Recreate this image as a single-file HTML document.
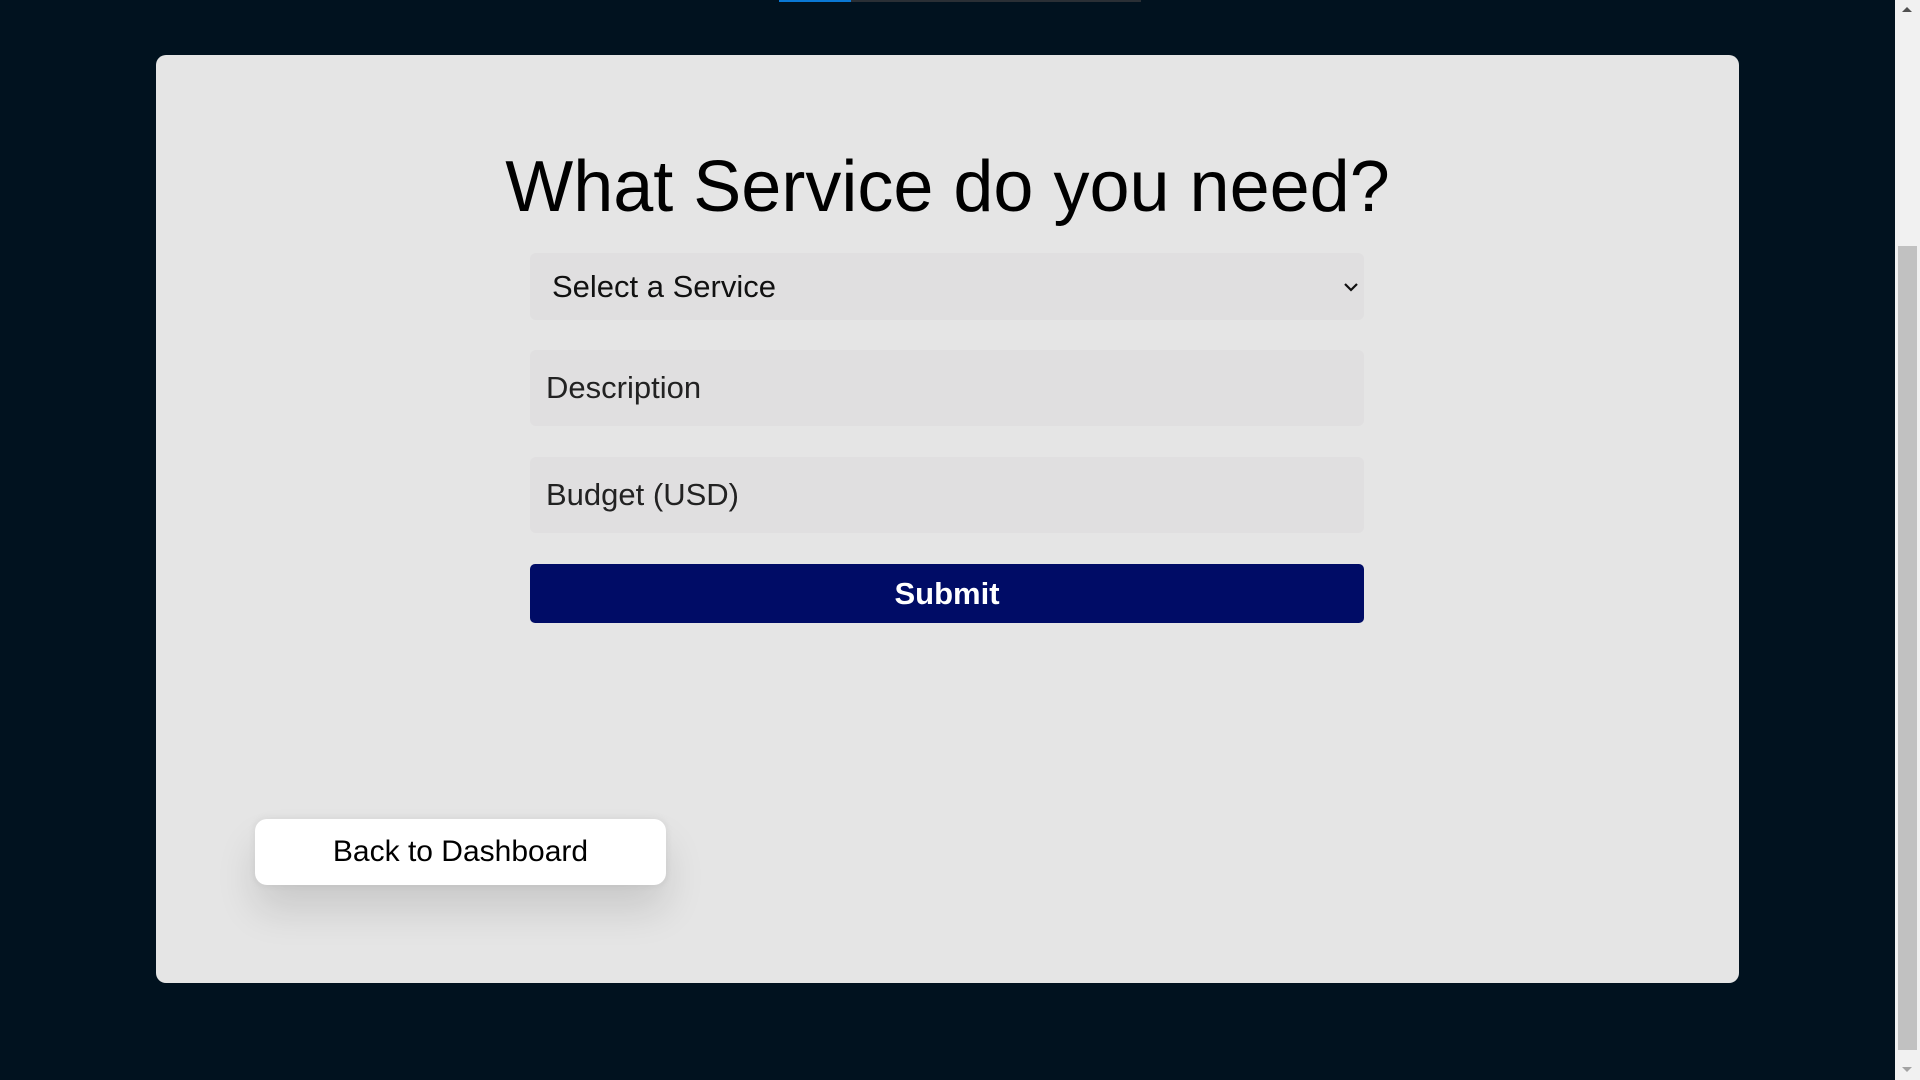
<!DOCTYPE html>
<html><head><style>
html,body{margin:0;padding:0;width:1920px;height:1080px;overflow:hidden;background:#01121f;font-family:"Liberation Sans",Arial,sans-serif;}
.tabA{position:absolute;left:779px;top:0;width:72px;height:2px;background:#0a78d4;}
.tabB{position:absolute;left:851px;top:0;width:290px;height:2px;background:#2a2f35;}
.card{position:absolute;left:156px;top:55px;width:1583px;height:928px;background:#e5e5e5;border-radius:10px;}
h1{position:absolute;left:0;top:142px;width:1895px;margin:0;text-align:center;font-weight:normal;font-size:72px;line-height:90px;color:#000;}
.field{position:absolute;left:530px;width:834px;background:#e0dfe0;border-radius:6px;color:#222;font-size:31px;box-sizing:border-box;}
.sel{top:253px;height:67px;padding-left:22px;line-height:67px;color:#111;}
.desc{top:350px;height:76px;padding-left:16px;line-height:76px;}
.bud{top:457px;height:76px;padding-left:16px;line-height:76px;}
.sub{position:absolute;left:530px;top:564px;width:834px;height:59px;background:#000c66;border-radius:5px;color:#fff;font-weight:bold;font-size:31px;text-align:center;line-height:59px;}
.back{position:absolute;left:255px;top:819px;width:411px;height:66px;background:#fff;border-radius:12px;text-align:center;line-height:66px;font-size:30px;color:#000;box-shadow:0 25px 40px rgba(0,0,0,0.12),0 0 3px 3px rgba(220,220,220,0.8);}
.sb{position:absolute;left:1895px;top:0;width:25px;height:1080px;background:#f1f1f1;}
.thumb{position:absolute;left:1898px;top:246px;width:19px;height:804px;background:#c1c1c1;}
</style></head><body>
<div class="tabA"></div><div class="tabB"></div>
<div class="card"></div>
<h1>What Service do you need?</h1>
<div class="field sel">Select a Service
<svg style="position:absolute;right:5px;top:28px" width="16" height="12" viewBox="0 0 16 12"><path d="M2 3 L8 9 L14 3" fill="none" stroke="#111" stroke-width="2.2"/></svg></div>
<div class="field desc">Description</div>
<div class="field bud">Budget (USD)</div>
<div class="sub">Submit</div>
<div class="back">Back to Dashboard</div>
<div class="sb"></div><div class="thumb"></div>
<svg style="position:absolute;left:1901px;top:5px" width="12" height="8"><path d="M1 7 L6 2 L11 7Z" fill="#505050"/></svg>
<svg style="position:absolute;left:1901px;top:1066px" width="12" height="8"><path d="M1 1 L6 6 L11 1Z" fill="#a3a3a3"/></svg>
</body></html>
